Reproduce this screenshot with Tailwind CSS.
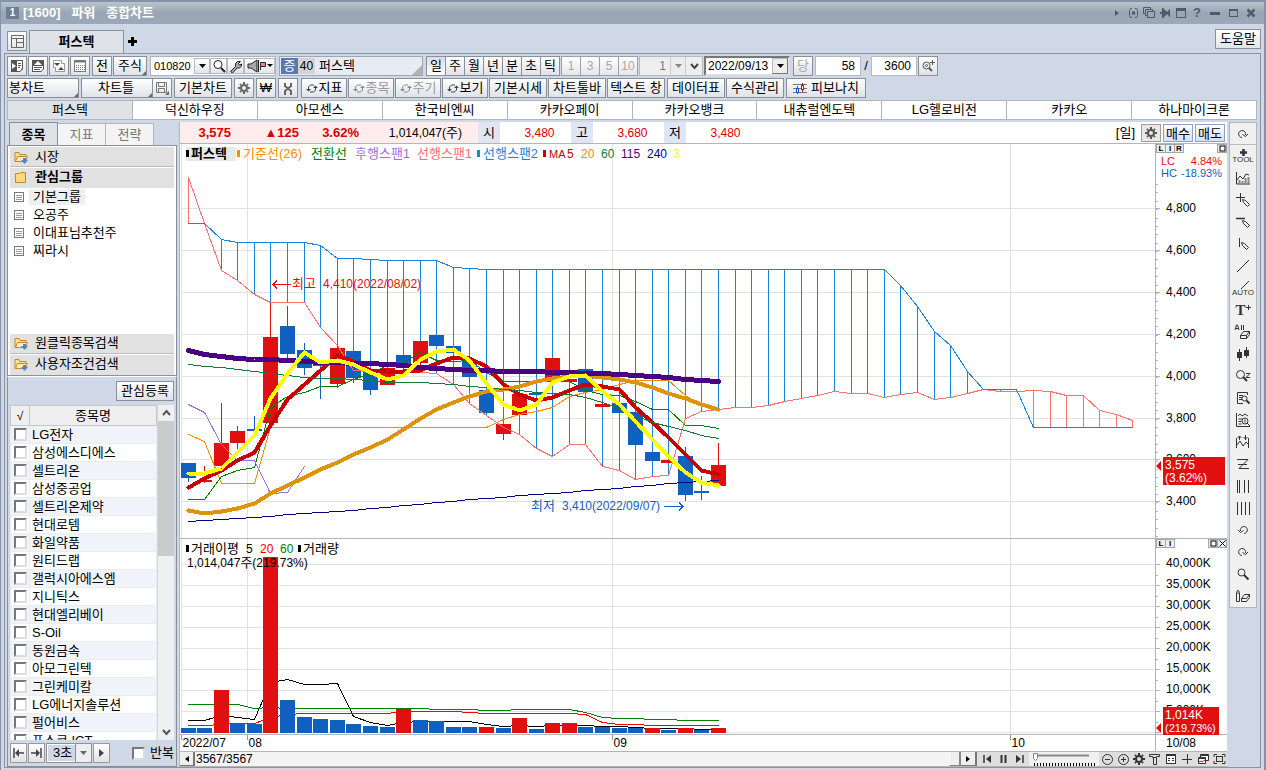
<!DOCTYPE html>
<html lang="ko">
<head>
<meta charset="utf-8">
<title>[1600] 파워 종합차트</title>
<script src="https://cdn.jsdelivr.net/npm/@tailwindcss/browser@4"></script>
</head>
<body class="h-screen flex flex-col overflow-hidden bg-[#cfd8e6] border-l border-r-2 border-[#8492aa] text-black text-[13px] leading-4 font-['Liberation_Sans','Noto_Sans_CJK_KR',sans-serif]">

<!-- title bar -->
<header class="h-6 shrink-0 flex items-center pl-1 pr-[5px] border-t-2 border-[#8593a8] bg-linear-to-b from-[#b8c3cc] via-[#9aa6b4] via-50% to-[#9ba8b8] text-white">
  <span class="w-[13px] h-3 bg-[#6f7e93] text-[10px] leading-3 font-bold text-center mr-1 ml-px">1</span>
  <h1 class="text-[13px] font-bold">[1600]&nbsp;&nbsp; 파워&nbsp;&nbsp; 종합차트</h1>
  <div class="ml-auto flex items-center text-[#4f5b6b] [&>button]:w-4 [&>button]:h-4 [&>button]:flex [&>button]:items-center [&>button]:justify-center">
    <button aria-label="펼치기"><svg width="6" height="8"><path d="M1 1l4 3-4 3z" fill="currentColor"/></svg></button>
    <button aria-label="연결"><svg width="11" height="12" fill="none" stroke="currentColor"><path d="M4 1.500H2.500l-1 2v5l1 2H4M7 1.500h1.500l1 2v5l-1 2H7"/><rect x="4" y="4.500" width="3" height="3" fill="currentColor" stroke="none"/></svg></button>
    <button aria-label="복사"><svg width="12" height="12" fill="none" stroke="currentColor"><path d="M2.500 6.500h-2v-6h7v2M4.500 8.500h-2v-6h7v2"/><rect x="4.500" y="4.500" width="7" height="6"/></svg></button>
    <button aria-label="고정"><svg width="11" height="12" fill="currentColor"><path d="M2 1h1l4 4 2-2v6L7 7l-4 4H2V7H0V5h2zM9 2h1v8H9z"/></svg></button>
    <button aria-label="창"><svg width="12" height="12" fill="none" stroke="currentColor"><rect x="1.500" y="1.500" width="9" height="9"/><path d="M1 2.500h10M1 3.500h10"/></svg></button>
    <button aria-label="도움" class="font-bold text-[13px]">?</button>
    <button aria-label="최소화" class="ml-0.5"><svg width="10" height="12"><rect y="5" width="10" height="3" fill="currentColor"/></svg></button>
    <button aria-label="최대화" class="ml-0.5"><svg width="11" height="12" fill="none" stroke="currentColor"><rect x="1.500" y="2.500" width="8" height="7"/><path d="M1 3.500h9"/></svg></button>
    <button aria-label="닫기" class="ml-0.5"><svg width="11" height="12"><path d="M1.500 2.500l7 7m0-7l-7 7" stroke="currentColor" stroke-width="2.500"/></svg></button>
  </div>
</header>

<!-- window tabs -->
<nav class="h-[29px] shrink-0 flex items-end pl-1.5 pr-[3px]">
  <button aria-label="화면 배치" class="w-5 h-5 mb-0.5 mr-0.5 border border-[#8a8f98] bg-linear-to-b from-white to-[#e0e3e8] flex items-center justify-center"><svg width="13" height="13" fill="none" stroke="#666"><path d="M.5.5h12v12H.5zM.5 3.500h12M5.500 3.500v9M5.500 7.500h7"/></svg></button>
  <button class="w-[95px] h-[23px] border border-b-0 border-[#8a8f98] bg-[#dfe2e7] font-bold">퍼스텍</button>
  <button aria-label="탭 추가" class="ml-[3px] mb-1.5"><svg width="11" height="11"><path d="M5.500 1v9M1 5.500h9" stroke="#000" stroke-width="3"/></svg></button>
  <button class="ml-auto w-[46px] h-5 mb-1 border border-[#8a8f98] bg-linear-to-b from-white to-[#e0e3e8]">도움말</button>
</nav>

<div class="flex-1 min-h-0 ml-[3px] mr-[3px] mb-0.5 pl-0.5 pr-0.5 pt-0.5 border border-[#8e929c] flex flex-col gap-0.5">

  <!-- first toolbar -->
  <div class="h-5 shrink-0 flex items-stretch gap-px whitespace-nowrap [&_button]:flex [&_button]:items-center [&_button]:justify-center [&>button]:w-5 [&>button]:border [&>button]:border-[#8a8f98] [&>button]:bg-linear-to-b [&>button]:from-white [&>button]:to-[#dfe2e7]">
    <button aria-label="목록"><svg width="14" height="14"><path d="M1 1h12v9l-3 3H1z" fill="#555"/><path d="M7 2h5v7l-2 3H7z" fill="#fff"/><path d="M2 4l4 3-4 3z" fill="#fff"/><path d="M8 4.500h3M8 6.500h3M8 8.500h2" stroke="#555"/></svg></button>
    <button aria-label="위로"><svg width="14" height="14"><path d="M1 1h12v9l-3 3H1z" fill="#555"/><path d="M2 7h10v3l-2 2H2z" fill="#fff"/><path d="M3 6l4-4 4 4z" fill="#fff"/><path d="M3 8.500h8M3 10.500h6" stroke="#555"/></svg></button>
    <button aria-label="이전"><svg width="14" height="14"><path d="M1.500 1.500h8v3h3v8h-9v-4h-2z" fill="#fff" stroke="#999"/><path d="M2 4h6L5 7zM6 11l3-3 3 3z" fill="#444"/></svg></button>
    <button aria-label="달력"><svg width="14" height="14"><rect x="1.500" y="1.500" width="11" height="11" fill="#fff" stroke="#777"/><path d="M1 2.500h12" stroke="#777" stroke-width="2"/><path d="M3 6.500h9M3 8.500h9M3 10.500h9" stroke="#777" stroke-dasharray="1 1"/></svg></button>
    <button class="ml-px">전</button>
    <button class="w-[34px]!">주식<svg width="4" height="4" class="self-end -mr-1"><path d="M4 0v4H0z" fill="#666"/></svg></button>
    <div class="ml-0.5 w-[126px] border border-[#b0b4ba] bg-white flex items-center [&>button]:h-4 [&>button]:border [&>button]:border-[#b6bac0] [&>button]:bg-linear-to-b [&>button]:from-white [&>button]:to-[#e2e4e8]">
      <input aria-label="종목코드" value="010820" class="w-[43px] pl-[3px] text-[11px] bg-white outline-none">
      <button aria-label="종목 이력" class="w-4"><svg width="7" height="4"><path d="M0 0h7L3.500 4z"/></svg></button>
      <button aria-label="종목 검색" class="w-[17px]"><svg width="14" height="14" fill="none" stroke="#222"><circle cx="6" cy="5.500" r="4" fill="#fff"/><path d="M9 9l4 4" stroke-width="2"/></svg></button>
      <button aria-label="설정" class="w-[17px]"><svg width="13" height="13" fill="#aaa" stroke="#222"><path d="M1.500 11.500l5-5V3.500l2-2h3L9.500 3.500l1 1.500 2-1v2l-2 2H8l-4.500 5z"/></svg></button>
      <button aria-label="음성" class="w-[31px]"><svg width="26" height="14"><path d="M1 5h3l6-4v12L4 9H1z" fill="#aaa" stroke="#222"/><path d="M11.500 1v12" stroke="#222"/><path d="M13.500 11V3.500h5v4h-5" fill="#e88" stroke="#322"/><path d="M20 5h6l-3 3z"/></svg></button>
    </div>
    <div class="ml-0.5 w-36 border border-[#9ea7b5] bg-[#e6ebf4] flex items-center">
      <span class="w-[17px] h-4 ml-px bg-[#5b78b0] text-white text-center">증</span>
      <span class="w-[17px] h-4 bg-[#d4d4d4] text-center text-xs leading-4">40</span>
      <span class="ml-1">퍼스텍</span>
      <svg width="10" height="10" class="ml-auto self-end"><path d="M10 0v10H0z" fill="#b5b1ae"/></svg>
    </div>
    <div class="ml-0.5 flex [&>button]:w-5 [&>button]:-mr-px [&>button]:border [&>button]:border-[#8a8f98] [&>button]:bg-linear-to-b [&>button]:from-white [&>button]:to-[#dfe2e7]">
      <button class="from-[#d9dbe6]! to-white!">일</button><button>주</button><button>월</button><button>년</button><button>분</button><button>초</button><button>틱</button>
    </div>
    <div class="ml-px flex text-xs text-[#aaa79c] [&>button]:w-5 [&>button]:-mr-px [&>button]:border [&>button]:border-[#9a9fa8] [&>button]:bg-linear-to-b [&>button]:from-white [&>button]:to-[#e4e6ea]">
      <button>1</button><button>3</button><button>5</button><button>10</button>
    </div>
    <div class="ml-px w-16 flex border border-[#b6bac0] bg-[#eee] text-[#777]">
      <input aria-label="주기" value="1" class="w-[30px] pr-1 text-xs text-right bg-[#eee]">
      <button aria-label="주기 선택" class="w-4 bg-[#ececee] border-x border-[#ccc]"><svg width="7" height="4"><path d="M0 0h7L3.500 4z" fill="#888"/></svg></button>
      <button aria-label="더보기" class="w-4"><svg width="9" height="7"><path d="M1 1l3.500 4L8 1" fill="none" stroke="#444" stroke-width="2"/></svg></button>
    </div>
    <div class="relative w-[86px] border-2 border-[#777] border-b-[#ddd] border-r-[#ddd] bg-white flex">
      <select aria-label="날짜" class="w-full appearance-none pl-0.5 text-xs leading-4 outline-none"><option>2022/09/13</option></select>
      <span class="absolute right-0 inset-y-0 w-4 border border-[#bbb] border-r-[#777] border-b-[#777] bg-[#eee] flex items-center justify-center pointer-events-none"><svg width="7" height="4"><path d="M0 0h7L3.500 4z"/></svg></span>
    </div>
    <button class="ml-0.5 text-[#aaa79c]">당</button>
    <input aria-label="표시 개수" value="58" class="w-[46px] ml-px pr-[5px] text-xs text-right bg-white border border-[#b6bac0]">
    <span class="w-2 text-center self-center">/</span>
    <input aria-label="전체 개수" value="3600" class="w-[46px] pr-[5px] text-xs text-right bg-white border border-[#b6bac0]">
    <button aria-label="확대"><svg width="14" height="14" fill="none" stroke="#555"><circle cx="5.500" cy="6.500" r="3.500"/><circle cx="5.500" cy="6.500" r="1"/><path d="M8 9l3 3" stroke-width="2"/><path d="M9 3.500h5M11.500 1v5"/></svg></button>
  </div>

  <!-- second toolbar -->
  <div class="h-5 shrink-0 flex items-stretch gap-0.5 whitespace-nowrap [&_button]:flex [&_button]:items-center [&_button]:justify-center [&_button]:border [&_button]:border-[#8a8f98] [&_button]:bg-linear-to-b [&_button]:from-white [&_button]:to-[#dfe2e7]">
    <button class="w-[72px] justify-start! pl-px">봉차트<svg width="4" height="4" class="self-end ml-auto"><path d="M4 0v4H0z" fill="#666"/></svg></button>
    <div class="flex">
      <button class="w-[72px] pl-4">차트틀<svg width="4" height="4" class="self-end ml-auto"><path d="M4 0v4H0z" fill="#666"/></svg></button>
      <button aria-label="저장" class="w-5 -ml-px"><svg width="14" height="14" fill="none" stroke="#777"><path d="M1.500 1.500h10v10h-10zM3.500 1.500v4h6v-4M3.500 11.500v-4h6v4"/><path d="M14 10v4h-4z" fill="#666" stroke="none"/></svg></button>
    </div>
    <button class="w-[58px]">기본차트</button>
    <button aria-label="환경설정" class="w-5"><svg width="12" height="12" fill="none" stroke="#666"><circle cx="6" cy="6" r="3" stroke-width="2"/><path d="M6 0v2M6 10v2M0 6h2M10 6h2M2 2l1 1M9 9l1 1M2 10l1-1M9 3l1-1" stroke-width="2"/></svg></button>
    <button class="w-5">₩</button>
    <button aria-label="도구" class="w-5"><svg width="10" height="13" fill="none" stroke="#666" stroke-width="2"><path d="M2 1v3l6 5v4M8 1v3L2 9v4"/></svg></button>
    <button class="w-[46px] ml-px"><svg width="12" height="11" fill="none" stroke="#444" class="mr-px"><path d="M2.500 6.500V4l2-2H8M9.500 4.500V7l-2 2H4"/><path d="M0 6h5L2.500 8.500zM7 5h5L9.500 2.500z" fill="#444" stroke="none"/></svg>지표</button>
    <button class="w-[46px] text-[#999] -ml-px"><svg width="12" height="11" fill="none" stroke="#888" class="mr-px"><path d="M2.500 6.500V4l2-2H8M9.500 4.500V7l-2 2H4"/><path d="M0 6h5L2.500 8.500zM7 5h5L9.500 2.500z" fill="#888" stroke="none"/></svg>종목</button>
    <button class="w-[46px] text-[#999] -ml-px"><svg width="12" height="11" fill="none" stroke="#888" class="mr-px"><path d="M2.500 6.500V4l2-2H8M9.500 4.500V7l-2 2H4"/><path d="M0 6h5L2.500 8.500zM7 5h5L9.500 2.500z" fill="#888" stroke="none"/></svg>주기</button>
    <button class="w-[46px] -ml-px"><svg width="12" height="11" fill="none" stroke="#444" class="mr-px"><path d="M2.500 6.500V4l2-2H8M9.500 4.500V7l-2 2H4"/><path d="M0 6h5L2.500 8.500zM7 5h5L9.500 2.500z" fill="#444" stroke="none"/></svg>보기</button>
    <button class="w-[58px] -ml-px">기본시세</button>
    <button class="w-[58px] -ml-px">차트툴바</button>
    <button class="w-[58px] -ml-px">텍스트 창</button>
    <button class="w-[58px]">데이터표</button>
    <button class="w-[58px] -ml-px">수식관리</button>
    <button class="w-20"><svg width="14" height="13" class="mr-1"><path d="M0 2.500h14M0 6.500h14M0 10.500h14" stroke="#777"/><path d="M4.500 4v8" stroke="#15c"/><path d="M9.500 1v9" stroke="#c11"/><rect x="3.500" y="6.500" width="2" height="4" fill="#fff" stroke="#15c"/><rect x="8.500" y="3.500" width="2" height="4" fill="#fff" stroke="#c11"/></svg>피보나치</button>
  </div>

  <!-- stock tabs -->
  <nav class="h-5 shrink-0 flex mr-px border border-[#b3b5ba] bg-white divide-x divide-[#b3b5ba] [&>button]:flex-1">
    <button class="bg-[#dfe2e7]">퍼스텍</button><button>덕신하우징</button><button>아모센스</button><button>한국비엔씨</button><button>카카오페이</button><button>카카오뱅크</button><button>내츄럴엔도텍</button><button>LG헬로비전</button><button>카카오</button><button>하나마이크론</button>
  </nav>

  <div class="flex-1 min-h-0 flex">

    <!-- side panel -->
    <aside class="w-[170px] shrink-0 flex flex-col">
      <div class="flex items-end -mb-px pl-0.5 text-[#777] [&>button]:w-12 [&>button]:h-[23px] [&>button]:border [&>button]:border-b-0 [&>button]:border-l-0 [&>button]:border-[#b3b5ba] [&>button]:bg-[#f4f4f4]">
        <button class="w-[49px]! h-6! border-l! border-[#8a8f98]! bg-[#dfe2e7]! text-black font-bold">종목</button><button>지표</button><button>전략</button>
      </div>
      <div class="h-[231px] shrink-0 border border-[#8a8f98] bg-white flex flex-col px-0.5 pt-px">
        <button class="h-5 shrink-0 flex items-center pl-1 bg-[#e1e1e1] border-b border-[#bbb]"><svg width="14" height="14" class="mr-[7px]"><path d="M1 2.500h4l1 2h6v7H1z" fill="#ffe08a" stroke="#c8862a"/><path d="M3.500 6.500h10l-2 5h-10z" fill="#fff0b8" stroke="#c8862a"/><path d="M9 8h3v2h2l-3.500 4L7 10h2z" fill="#4a86d8"/></svg>시장</button>
        <button class="h-[21px] shrink-0 flex items-center pl-1 pb-0.5 bg-[#e1e1e1] border-t border-white font-bold"><svg width="14" height="14" class="mr-[7px]"><path d="M1.500 3.500h4l1-1h5v10h-10z" fill="#ffd977" stroke="#c8862a"/></svg>관심그룹</button>
        <ul class="flex-1 pl-1 [&>li]:h-[18px] [&>li]:flex [&>li]:items-center [&>li]:gap-[5px]" id="groups"></ul>
        <button class="h-5 shrink-0 flex items-center pl-1 pb-0.5 bg-[#e1e1e1] border-b border-[#bbb]"><svg width="14" height="14" class="mr-[7px]"><path d="M1 2.500h4l1 2h6v7H1z" fill="#ffe08a" stroke="#c8862a"/><path d="M3.500 6.500h10l-2 5h-10z" fill="#fff0b8" stroke="#c8862a"/><path d="M9 8h3v2h2l-3.500 4L7 10h2z" fill="#4a86d8"/></svg>원클릭종목검색</button>
        <button class="h-[21px] shrink-0 flex items-center pl-1 pb-0.5 bg-[#e1e1e1] border-t border-white"><svg width="14" height="14" class="mr-[7px]"><path d="M1 2.500h4l1 2h6v7H1z" fill="#ffe08a" stroke="#c8862a"/><path d="M3.500 6.500h10l-2 5h-10z" fill="#fff0b8" stroke="#c8862a"/><path d="M9 8h3v2h2l-3.500 4L7 10h2z" fill="#4a86d8"/></svg>사용자조건검색</button>
      </div>
      <div class="flex-1 min-h-0 border border-[#8a8f98] border-t-white flex flex-col px-0.5">
        <button class="self-end w-[58px] h-5 mt-1 mb-1 shrink-0 border border-[#8a8f98] bg-linear-to-b from-white to-[#dfe2e7]">관심등록</button>
        <div class="flex-1 min-h-0 flex">
          <div class="flex-1 overflow-hidden bg-white">
            <table class="w-full border-collapse">
              <thead><tr class="h-5 bg-[#efefef]"><th class="w-[19px] border border-[#c8c8c8] p-0 font-normal text-xs">√</th><th class="border border-[#c8c8c8] p-0 font-normal">종목명</th></tr></thead>
              <tbody id="stocks"></tbody>
            </table>
          </div>
          <div class="w-4 ml-px bg-[#f0f0f0] flex flex-col items-center" aria-hidden="true">
            <svg width="15" height="16" class="shrink-0"><path d="M4 10l3.500-4L11 10" fill="none" stroke="#555" stroke-width="2"/></svg>
            <div class="w-full h-[135px] bg-[#cbcbcb]"></div>
            <svg width="15" height="16" class="shrink-0 mt-auto"><path d="M4 6l3.500 4L11 6" fill="none" stroke="#555" stroke-width="2"/></svg>
          </div>
        </div>
        <div class="h-[26px] shrink-0 flex items-center [&_button]:border [&_button]:border-[#9a9a9a] [&_button]:bg-linear-to-b [&_button]:from-white [&_button]:to-[#e2e2e2] [&_button]:h-5 [&_button]:flex [&_button]:items-center [&_button]:justify-center">
          <button aria-label="처음" class="w-[17px]"><svg width="11" height="10"><path d="M1 0v10M4 5h7" stroke="#444" stroke-width="1.500"/><path d="M2 5l4-4v8z" fill="#444"/></svg></button>
          <button aria-label="마지막" class="w-[17px] ml-px"><svg width="11" height="10"><path d="M10 0v10M0 5h7" stroke="#444" stroke-width="1.500"/><path d="M9 5L5 1v8z" fill="#444"/></svg></button>
          <div class="relative ml-px w-[46px] h-5 border border-[#8a8f98] bg-white p-px flex">
            <select aria-label="간격" class="w-full h-4 appearance-none bg-[#cfd8e6] pl-[5px]"><option>3초</option></select>
            <span class="absolute right-0 inset-y-0 w-4 border-l border-[#8a8f98] bg-[#eee] flex items-center justify-center pointer-events-none"><svg width="7" height="4"><path d="M0 0h7L3.500 4z" fill="#666"/></svg></span>
          </div>
          <button aria-label="재생" class="w-[17px] ml-px"><svg width="5" height="8"><path d="M0 0l5 4-5 4z" fill="#444"/></svg></button>
          <label class="ml-auto flex items-center gap-[5px]"><input type="checkbox" class="appearance-none w-[13px] h-[13px] bg-white border-2 border-[#777] border-r-[#ddd] border-b-[#ddd]">반복</label>
        </div>
      </div>
    </aside>

    <!-- chart -->
    <main class="flex-1 min-w-0 ml-0.5 mr-0.5 border-l border-[#b8b8b8] bg-white flex flex-col">
      <div class="h-[22px] shrink-0 flex items-center border-b border-[#b3b5ba] text-[#d80000] text-xs whitespace-nowrap">
        <div class="w-[298px] h-full flex items-center bg-[#ffecec] font-bold text-[13px]">
          <span class="w-[51px] text-right">3,575</span><span class="w-[68px] text-right">▲125</span><span class="w-[60px] text-right">3.62%</span><span class="w-[103px] text-right text-black text-xs font-normal">1,014,047(<span class="text-[13px]">주</span>)</span>
        </div>
        <span class="w-[22px] h-full leading-[21px] text-[13px] bg-[#dfe5f3] text-center text-black">시</span><span class="w-[71px] text-center pl-2">3,480</span>
        <span class="w-[22px] h-full leading-[21px] text-[13px] bg-[#dfe5f3] text-center text-black">고</span><span class="w-[71px] text-center pl-2">3,680</span>
        <span class="w-[22px] h-full leading-[21px] text-[13px] bg-[#dfe5f3] text-center text-black">저</span><span class="w-[71px] text-center pl-2">3,480</span>
        <div class="ml-auto flex items-center gap-0.5 text-black text-[13px] pr-0.5">
          <span class="mr-1">[일]</span>
          <button aria-label="주문 설정" class="w-5 h-[18px] border border-[#a59a94] bg-[#e8e8e8] flex items-center justify-center"><svg width="12" height="12" fill="none" stroke="#555"><circle cx="6" cy="6" r="3" stroke-width="2"/><path d="M6 0v2M6 10v2M0 6h2M10 6h2M2 2l1 1M9 9l1 1M2 10l1-1M9 3l1-1" stroke-width="2"/></svg></button>
          <button class="w-[30px] h-[18px] border border-[#8ea2c8] bg-linear-to-b from-white to-[#d5dff2]">매수</button>
          <button class="w-[30px] h-[18px] border border-[#8ea2c8] bg-linear-to-b from-white to-[#d5dff2]">매도</button>
        </div>
      </div>
      <section class="h-[394px] shrink-0 flex" aria-label="가격 차트">
        <div class="flex-1 min-w-0 overflow-hidden"><svg class="w-full h-full" shape-rendering="crispEdges"><g id="price" transform="translate(-180 -144)"></g></svg></div>
        <div class="relative w-[72px] shrink-0 border-l border-[#b3b5ba]">
          <svg class="w-full h-full text-xs"><g id="priceAxis" transform="translate(-1156 -144)"></g></svg>
          <div class="absolute top-0 inset-x-0 flex pr-px [&>button]:w-[10px] [&>button]:h-[9px] [&>button]:-mr-px [&>button]:border [&>button]:border-[#a5a5a5] [&>button]:bg-[#eee] [&>button]:text-[8px] [&>button]:leading-[7px] [&>button]:font-bold">
            <button>L</button><button>I</button><button>R</button><button aria-label="확대" class="ml-auto"><svg width="7" height="7" class="mx-auto"><rect x="1" y="1" width="5" height="5" fill="#fff" stroke="#000"/></svg></button>
          </div>
        </div>
      </section>
      <section class="flex-1 min-h-0 flex border-t border-[#b3b5ba]" aria-label="거래량 차트">
        <div class="flex-1 min-w-0 overflow-hidden"><svg class="w-full h-full" shape-rendering="crispEdges"><g id="volume" transform="translate(-180 -539)"></g></svg></div>
        <div class="relative w-[72px] shrink-0 border-l border-[#b3b5ba]">
          <svg class="w-full h-full text-xs"><g id="volumeAxis" transform="translate(-1156 -539)"></g></svg>
          <div class="absolute top-0 inset-x-0 flex pr-px [&>button]:w-[10px] [&>button]:h-[9px] [&>button]:-mr-px [&>button]:border [&>button]:border-[#a5a5a5] [&>button]:bg-[#eee] [&>button]:text-[8px] [&>button]:leading-[7px] [&>button]:font-bold">
            <button>L</button><button>I</button><button aria-label="확대" class="ml-auto"><svg width="7" height="7" class="mx-auto"><rect x="1" y="1" width="5" height="5" fill="#fff" stroke="#000"/></svg></button><button aria-label="닫기"><svg width="7" height="7" class="mx-auto"><path d="M.5.5l6 6m0-6l-6 6" stroke="#000"/></svg></button>
          </div>
        </div>
      </section>
      <div class="h-4 shrink-0 flex items-stretch border-t border-b border-[#b3b5ba] bg-[#dedede] whitespace-nowrap [&>button]:flex [&>button]:items-center [&>button]:justify-center">
        <button aria-label="왼쪽" class="w-[15px] bg-[#efefef] border-r-2 border-b border-[#777]"><svg width="4" height="6"><path d="M4 0v6L0 3z"/></svg></button>
        <div class="flex-1 bg-[#f4f4f4] flex text-xs"><span class="leading-[14px] pl-px">3567/3567</span><span class="ml-auto w-3 bg-[#efefef] border-r-2 border-b border-[#888] border-l border-l-white"></span></div>
        <button aria-label="오른쪽" class="w-4 bg-[#efefef] border-r-2 border-b border-[#777] mr-0.5"><svg width="4" height="6"><path d="M0 0v6l4-3z"/></svg></button>
        <button aria-label="처음으로" class="w-4"><svg width="9" height="8"><path d="M1 0v8" stroke="#333" stroke-width="1.500"/><path d="M8 0v8L3 4z" fill="#333"/></svg></button>
        <button aria-label="일시정지" class="w-4"><svg width="7" height="8"><path d="M1.500 0v8M5.500 0v8" stroke="#333" stroke-width="2"/></svg></button>
        <button aria-label="끝으로" class="w-4"><svg width="9" height="8"><path d="M8 0v8" stroke="#333" stroke-width="1.500"/><path d="M1 0v8l5-4z" fill="#333"/></svg></button>
        <div class="w-[70px] bg-[#f0f0f0] ml-0.5 overflow-hidden"><svg width="70" height="14"><path d="M6 3.500h54" stroke="#888" stroke-width="2"/><path d="M4.500 1.500h4v5l-2 2-2-2z" fill="#fff" stroke="#888"/><path d="M5 12.500h62" stroke="#000" stroke-width="3" stroke-dasharray="1 2"/></svg></div>
        <button aria-label="축소" class="w-4"><svg width="13" height="13" fill="none" stroke="#333"><circle cx="6.500" cy="6.500" r="5"/><path d="M4 6.500h5"/></svg></button>
        <button aria-label="확대" class="w-4"><svg width="13" height="13" fill="none" stroke="#333"><circle cx="6.500" cy="6.500" r="5"/><path d="M4 6.500h5M6.500 4v5"/></svg></button>
        <button aria-label="설정" class="w-4"><svg width="12" height="12" fill="none" stroke="#333"><circle cx="6" cy="6" r="3" stroke-width="2"/><path d="M6 0v2M6 10v2M0 6h2M10 6h2M2 2l1 1M9 9l1 1M2 10l1-1M9 3l1-1" stroke-width="2"/></svg></button>
        <button aria-label="도구" class="w-4"><svg width="12" height="12" fill="none" stroke="#333"><path d="M.5 3.500v-2h10v2h-3v1h-4v-1zM4.500 5v6.500h3V5"/></svg></button>
        <button aria-label="표" class="w-4"><svg width="12" height="12" fill="none" stroke="#333"><rect x="1.500" y="1.500" width="9" height="9" fill="#fff"/><path d="M1 2h10" stroke-width="2"/><path d="M3 5.500h2M7 5.500h2M3 7.500h2M7 7.500h2"/></svg></button>
        <button aria-label="추가" class="w-4"><svg width="12" height="12" stroke="#333"><path d="M1 6.500h10M6.500 1v10"/></svg></button>
        <button aria-label="차트 창" class="w-4"><svg width="12" height="12" fill="#fff" stroke="#333"><path d="M3.500 1.500h8v6h-8zM3 2.500h9"/><path d="M1.500 4.500h7v6h-7zM1 5.500h8"/><path d="M2 9l2-1 1 1 3-2" stroke="#c22"/></svg></button>
        <button aria-label="전체화면" class="w-4"><svg width="13" height="12" fill="none" stroke="#333"><path d="M1 4V1.500h3M9 1.500h3V4M12 8v2.500H9M4 10.500H1V8"/><rect x="3.500" y="3.500" width="6" height="5"/></svg></button>
      </div>
    </main>

    <!-- drawing tools -->
    <div class="w-7 shrink-0 self-start mr-px border border-[#b3b5ba] bg-[#f0f0f0] text-[#333] flex flex-col [&>button]:h-[22px] [&>button]:flex [&>button]:flex-col [&>button]:items-center [&>button]:justify-center [&_svg]:fill-none [&_svg]:stroke-[#333]">
      <button aria-label="회전" class="border-b border-[#bbb]"><svg width="14" height="12"><path d="M6 9.500A3.500 3.500 0 1 1 9.500 7M6.500 6.500l3 2 2.500-2.500"/></svg></button>
      <button class="text-[8px] leading-[7px]" aria-label="TOOL"><svg width="9" height="7"><path d="M4.500 0v7M1 3.500h7" stroke-width="2.500"/></svg>TOOL</button>
      <button aria-label="지표"><svg width="16" height="14"><path d="M1.500 1v12H15M2 9l3-4 3 3 3-5 3 1"/><path d="M4.500 13V9M7.500 13v-3M10.500 13V7M13.500 13V6" stroke="#888" stroke-width="2"/></svg></button>
      <button aria-label="십자선"><svg width="16" height="16"><path d="M1 5.500h9M5.500 1v9M7.500 7.500l1 3 4 4 2-2-4-4z"/></svg></button>
      <button aria-label="수평선"><svg width="16" height="16"><path d="M1 4.500h9" stroke-width="1.500"/><path d="M7.500 6.500l1 3 4 4 2-2-4-4z"/></svg></button>
      <button aria-label="수직선"><svg width="16" height="16"><path d="M4.500 2v9"/><path d="M6.500 6.500l1 3 4 4 2-2-4-4z"/></svg></button>
      <button aria-label="추세선"><svg width="14" height="14"><path d="M1 13L13 1"/></svg></button>
      <button class="text-[8px] leading-[7px]" aria-label="AUTO"><svg width="12" height="8"><path d="M4 8l8-8"/></svg>AUTO</button>
      <button aria-label="텍스트" class="flex-row! font-bold text-[15px] font-['Liberation_Serif',serif]">T<svg width="5" height="12"><path d="M0 3.500h5M2.500 1v5"/></svg></button>
      <button aria-label="모두 지우기"><svg width="18" height="18"><path d="M6.500 12.500l3-4h6v3l-3 4h-6zM6.500 12.500h6l3-4M12.500 12.500v3M1 7l1.500-5h1L5 7M1.500 5.500h3M7.500 2v5M9.500 2v5"/></svg></button>
      <button aria-label="봉"><svg width="14" height="14"><path d="M3.500 2v12M10.500 0v11"/><path d="M2 6h3v4H2zM9 4h3v4H9z" stroke-width="2"/></svg></button>
      <button aria-label="영역 확대"><svg width="16" height="14"><circle cx="5.500" cy="5.500" r="4"/><path d="M8 8l4 4" stroke-width="2"/><path d="M11 4.500h4l-4 4h4"/></svg></button>
      <button aria-label="문서 검색"><svg width="16" height="14"><path d="M12.500 4V1.500h-10v11H8M4 4.500h4M4 6.500h3M4 8.500h3"/><circle cx="9.500" cy="7.500" r="2.500"/><path d="M11.500 9.500l3 3" stroke-width="2"/></svg></button>
      <button aria-label="차트 검색"><svg width="16" height="16"><path d="M1.500 1v13.500H15M3 4l2-2 2 2 3-2 3 2M3.500 7h4M3.500 9.500h3M3.500 12h3"/><circle cx="10" cy="9" r="3"/><path d="M10 7.500v3M12 11l3 3"/></svg></button>
      <button aria-label="패턴"><svg width="16" height="16"><path d="M1.500 4v10M13.500 4v10M1 12l4-5 3 5 3-4 3 3M4.500 2v4M10.500 1v5M2.500 4l2-2 2 2M8.500 3l2 2 2-2"/></svg></button>
      <button aria-label="지그재그"><svg width="14" height="12"><path d="M1 1.500h11L3 10.500h10M2 6.500h9"/></svg></button>
      <button aria-label="수직선 묶음"><svg width="14" height="13"><path d="M1.500 0v13M3.500 0v13M8.500 0v13M12.500 0v13"/></svg></button>
      <button aria-label="수직선 간격"><svg width="14" height="13"><path d="M1.500 0v13M5.500 0v13M9.500 0v13M13.500 0v13"/></svg></button>
      <button aria-label="실행 취소"><svg width="14" height="12"><path d="M8 9.500A3.500 3.500 0 1 0 4.500 7M7.500 6.500l-3 2L2 6"/></svg></button>
      <button aria-label="다시 실행"><svg width="14" height="12"><path d="M6 9.500A3.500 3.500 0 1 1 9.500 7M6.500 6.500l3 2 2.500-2.500"/></svg></button>
      <button aria-label="돋보기"><svg width="14" height="14"><circle cx="5.500" cy="5.500" r="3.500"/><path d="M8 8l4.500 4.500" stroke-width="2"/></svg></button>
      <button aria-label="지우개"><svg width="16" height="14"><path d="M1.500 4v8.500h3V4zM1.500 3.500l1-2h1l1 2M6.500 9.500l3-4h5v3l-3 4h-5zM6.500 9.500h5l3-4"/></svg></button>
    </div>
  </div>
</div>

<script>
const groups = ['기본그룹', '오공주', '이대표님추천주', '찌라시'];
document.getElementById('groups').innerHTML = groups.map((g, i) =>
  `<li><svg width="10" height="10"><rect x=".5" y=".5" width="9" height="9" fill="#fff" stroke="#777"/><path d="M2 3.500h6M2 5.500h6M2 7.500h6" stroke="#999"/></svg><span class="${i ? 'px-1' : 'px-1 bg-[#efefef]'}">${g}</span></li>`).join('');

const stocks = ['LG전자', '삼성에스디에스', '셀트리온', '삼성중공업', '셀트리온제약', '현대로템', '화일약품', '원티드랩', '갤럭시아에스엠', '지니틱스', '현대엘리베이', 'S-Oil', '동원금속', '아모그린텍', '그린케미칼', 'LG에너지솔루션', '펄어비스', '포스코 ICT'];
document.getElementById('stocks').innerHTML = stocks.map((s, i) =>
  `<tr class="h-[18px] ${i % 2 ? 'bg-white' : 'bg-[#f0f4fa]'}"><td class="border border-[#ececec] p-0 align-middle"><input type="checkbox" id="s${i}" class="block mx-auto appearance-none w-[13px] h-[13px] bg-white border-2 border-[#777] border-r-[#ddd] border-b-[#ddd]"></td><td class="border border-[#ececec] p-0 pl-0.5 whitespace-nowrap"><label for="s${i}" class="block h-4">${s}</label></td></tr>`).join('');

const X = i => Math.floor(188.1 + 16.576 * i) + 0.5;
const line = (x1, y1, x2, y2, c) => `<path d="M${x1} ${y1}L${x2} ${y2}" stroke="${c}"/>`;
const rect = (x, y, w, h, c) => `<rect x="${x}" y="${y}" width="${w}" height="${h}" fill="${c}"/>`;
const poly = (ys, c, w = 1) => `<polyline points="${ys.map((y, i) => y == null ? '' : X(i) + ',' + (y + 0.5)).join(' ')}" fill="none" stroke="${c}" stroke-width="${w}" stroke-linejoin="round" stroke-linecap="round"/>`;
const text = (x, y, s, c = '#000', extra = '') => `<text x="${x}" y="${y}" fill="${c}" ${extra}>${s}</text>`;
const SM = 'class="text-xs"', XS = 'class="text-[11px]"';
const RED = '#e01010', BLUE = '#1060c0', GRID = '#e2e2e2', SPAN1 = '#ff7070', SPAN2 = '#1a84d8';

// leading spans
const span1 = [177,223,270,280,294,302,302,302,327,345,370,371,371,371,372,373,384,403,415,427,434,448,456,444,444,466,470,479,476,475,418,411,409,407,407,405,401,398,395,391,393,393,397,394,392,399,397,393,389,391,391,390,391,395,395,410,414,420];
const span2 = [223,223,239,242,242,242,242,242,245,258,258,259,260,260,260,260,267,268,269];
while (span2.length < 43) span2.push(269);
span2.push(285, 306, 331, 345, 371, 389, 389, 389);
while (span2.length < 58) span2.push(427);

let p = '';
for (let k = 0; k < 8; k++) p += line(181, Math.round(208 + k * 41.9) + 0.5, 4000, Math.round(208 + k * 41.9) + 0.5, GRID);
for (const x of [181.5, 247.5, 612.5, 1010.5]) p += line(x, 144, x, 538, GRID);
span1.forEach((a, i) => { p += line(X(i), a, X(i), span2[i], a > span2[i] ? SPAN2 : SPAN1); });
p += line(X(0), 177, X(0), 223, SPAN1);
// candles: colour, body top, body bottom, wick top, wick bottom
const candles = [
 ['b',463,478,463,482],['r',480,482,466,483],['r',443,466,403,466],['r',431,443,426,449],['b',429,431,416,431],['r',337,423,303,423],['b',326,354,306,358],['b',350,368,343,375],['b',364,366,360,399],['r',348,384,345,388],['b',351,378,351,383],['b',372,390,372,395],['r',368,385,368,385],['b',355,367,355,367],['r',341,363,341,373],['b',335,346,335,346],['b',346,353,346,353],['b',360,377,360,377],['b',390,413,390,413],['r',424,434,424,440],['r',394,415,394,415],['b',393,395,393,395],['r',358,378,358,378],['r',379,382,379,382],['b',369,392,369,392],['r',404,407,404,407],['b',403,413,403,413],['b',412,445,412,445],['b',452,461,452,461],['r',460,463,460,463],['b',456,495,447,501],['b',491,493,476,500],['r',465,486,443,486]];
candles.forEach(([k, a, b, c, d], i) => { const col = k === 'r' ? RED : BLUE; p += line(X(i), c, X(i), d, col) + rect(X(i) - 7.5, a, 15, b - a, col); });
p += poly([434,441,483,483,483,427,427,427,427,427,427,427,427,427,427,427,427,427,427,419,414,411,407,396,392,389,384,380,380,380,395,405,409], '#ff8c00');
p += poly([499,499,476,470,467,407,396,392,386,386,379,373,365,362,352,360,361,360,372,381,381,381,381,381,390,394,395,401,409,409,425,425,428], '#008000');
p += poly([404,412,444,460,460,493,492,466], '#a070e0');
p += poly(span1, SPAN1) + poly(span2, SPAN2);
p += poly([487,478,470,460,452,425,399,384,370,355,361,370,371,371,370,363,357,358,366,384,394,400,397,390,384,386,389,407,422,437,454,470,474], '#c80000', 4);
p += poly([510,513,511,508,503,493,485,477,469,462,454,447,439,429,418,409,402,396,391,389,386,381,378,376,375,377,379,382,387,393,398,404,409], '#de930c', 4);
p += poly([364,366,367,369,371,373,375,377,378,378,379,380,382,382,382,383,384,386,387,389,390,392,393,394,397,402,408,415,422,426,430,435,438], '#157a38');
p += poly([350,354,356,358,359,359,360,361,362,362,363,363,364,365,367,368,369,370,370,371,371,371,372,372,373,373,374,375,376,377,379,380,381], '#4b0082', 5);
p += poly([521,520,519,518,517,516,514,513,512,511,510,508,507,505,504,502,501,499,498,497,495,494,493,492,490,489,488,486,485,483,482,481,480], '#000088');
p += poly([473,473,468,452,435,398,373,352,362,360,364,372,379,375,359,351,349,360,383,404,410,404,382,376,375,391,404,421,439,456,472,482,485], '#ffff00', 4);
p += line(X(57), 420, X(57), 427, SPAN1);
p += rect(186, 147, 50, 14, '#e8e8e8');
for (const [x, c] of [[186,'#000'],[237,'#ff8c00'],[477,SPAN2],[543,'#c80000']]) p += rect(x, 150, 3, 7, c);
for (const [x, s, c, e] of [[191,'퍼스텍','#000','font-weight="bold"'],[243,'기준선(26)','#ff8c00'],[311,'전환선','#008000'],[355,'후행스팬1','#a070e0'],[417,'선행스팬1',SPAN1],[483,'선행스팬2',SPAN2],[549,'MA','#c80000',XS],[567,'5','#c80000',SM],[581,'20','#de930c',SM],[601,'60','#157a38',SM],[621,'115','#4b0082',SM],[647,'240','#000088',SM],[673,'3','#ffff00',SM]]) p += text(x, 158, s, c, e || '');
p += `<path d="M291 284.500h-18l4-4m-4 4l4 4" fill="none" stroke="${RED}"/>` + text(292, 288, '최고', RED) + text(323, 288, '4,410(2022/08/02)', RED, SM);
p += text(531, 510, '최저', BLUE) + text(562, 510, '3,410(2022/09/07)', BLUE, SM) + `<path d="M664 506.500h19l-4-4m4 4l-4 4" fill="none" stroke="${BLUE}"/>`;
document.getElementById('price').innerHTML = p;

let a = '';
for (let y = 184; y < 536; y += 8.38) a += rect(1156, Math.round(y), 2, 1, '#b3b5ba');
for (let k = 0; k < 8; k++) {
  const y = Math.round(208 + k * 41.9);
  a += rect(1156, y, 4, 1, '#b3b5ba') + text(1166, y + 4, (4800 - 200 * k).toLocaleString('en-US'));
}
a += text(1161, 165, 'LC', RED, XS) + text(1222, 165, '4.84%', RED, 'text-anchor="end" ' + XS) + text(1161, 177, 'HC', BLUE, XS) + text(1222, 177, '-18.93%', BLUE, 'text-anchor="end" ' + XS);
a += rect(1163, 457, 62, 28, RED) + `<path d="M1156 466l5-5v10z" fill="${RED}"/>` + text(1165, 469, '3,575', '#fff') + text(1165, 482, '(3.62%)', '#fff');
document.getElementById('priceAxis').innerHTML = a;

let v = '';
for (let k = 0; k < 9; k++) v += line(181, Math.round(564 + k * 21.05) + 0.5, 4000, Math.round(564 + k * 21.05) + 0.5, GRID);
for (const x of [181.5, 247.5, 612.5, 1010.5]) v += line(x, 539, x, 733, GRID);
v += poly([720,720,715,717,719,682,679,684,684,683,716,722,725,722,721,721,721,721,724,726,725,726,725,725,725,726,726,727,728,728,728,729,729], '#000');
v += poly([725,725,724,723,723,717,714,713,713,713,713,713,713,711,711,711,711,712,713,713,713,713,713,713,714,722,724,724,725,725,725,725,725], '#ff0000');
v += poly([704,704,704,704,708,707,708,708,708,708,708,708,708,708,708,709,709,709,710,710,709,709,709,709,712,717,718,718,719,719,720,720,720], '#008000');
const vols = ['b728','b728','r690','b723','b724','r557','b700','b717','b719','b720','b724','b726','b727','r709','b720','b721','b727','b727','r727','b728','r718','b729','r723','r723','b727','b727','b728','b728','r728','b730','r728','b730','r728'];
vols.forEach((s, i) => { const t = +s.slice(1); v += rect(X(i) - 7.5, t, 15, 733 - t, s[0] === 'r' ? RED : BLUE); });
v += line(180, 734.5, 4000, 734.5, '#b3b5ba');
for (const [x, s] of [[181.5,'2022/07'],[247.5,'08'],[612.5,'09'],[1010.5,'10']]) v += line(x, 735, x, 740, '#999') + text(x + 1, 747, s, '#000', SM);
v += rect(186, 545, 3, 7, '#000') + text(191, 553, '거래이평') + text(246, 553, '5', '#000', SM) + text(260, 553, '20', '#e00', SM) + text(280, 553, '60', '#008000', SM) + rect(298, 545, 3, 7, '#000') + text(303, 553, '거래량');
v += text(187, 567, '1,014,047<tspan class="text-[13px]">주</tspan>(219.73%)', '#000', SM);
document.getElementById('volume').innerHTML = v;

let w = '';
for (let k = 0; k < 9; k++) {
  const y = Math.round(564 + k * 21.05);
  w += rect(1156, y, 4, 1, '#b3b5ba');
  if (k < 8) w += rect(1156, y + 11, 2, 1, '#b3b5ba') + text(1166, y + 3, (40 - 5 * k) + ',000K');
}
w += rect(1156, 734, 72, 1, '#b3b5ba') + text(1166, 747, '10/08');
w += rect(1163, 707, 56, 28, RED) + `<path d="M1156 728l5-5v10z" fill="${RED}"/>` + text(1165, 719, '1,014K', '#fff') + text(1165, 732, '(219.73%)', '#fff', XS);
document.getElementById('volumeAxis').innerHTML = w;
</script>
</body>
</html>
